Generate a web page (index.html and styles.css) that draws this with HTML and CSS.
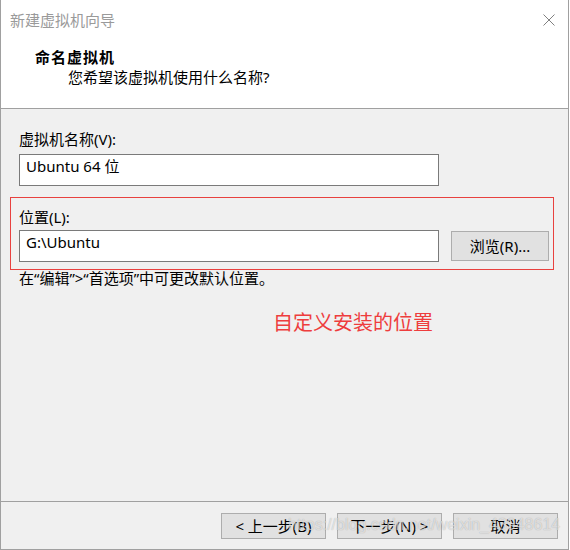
FILE: index.html
```html
<!DOCTYPE html>
<html lang="zh-CN">
<head>
<meta charset="utf-8">
<title>新建虚拟机向导</title>
<link rel="stylesheet" href="styles.css">
</head>
<body>
<div class="wizard">
  <div class="titlebar">
    <span class="title">新建虚拟机向导</span>
    <svg class="close" width="12" height="12" viewBox="0 0 12 12"><path d="M0.5 0.5L11.5 11.5M11.5 0.5L0.5 11.5" stroke="#808080" stroke-width="1" fill="none"/></svg>
  </div>
  <div class="head">
    <div class="head-title">命名虚拟机</div>
    <div class="head-sub">您希望该虚拟机使用什么名称?</div>
  </div>
  <div class="content">
    <div class="label">虚拟机名称(V):</div>
    <div class="field">Ubuntu 64 位</div>
    <div class="location">
      <div class="label">位置(L):</div>
      <div class="loc-row">
        <div class="field">G:\Ubuntu</div>
        <div class="btn browse">浏览(R)...</div>
      </div>
    </div>
    <div class="hint">在“编辑”&gt;“首选项”中可更改默认位置。</div>
    <div class="note">自定义安装的位置</div>
  </div>
  <div class="footer">
    <div class="btn">&lt; 上一步(B)</div>
    <div class="btn">下一步(N) &gt;</div>
    <div class="btn">取消</div>
  </div>
  <div class="watermark">https://blog.csdn.net/weixin_43948614</div>
</div>
</body>
</html>
```
FILE: styles.css
```css
* {margin:0; padding:0; box-sizing:border-box;}
body {background:#fff; font-family:"Noto Sans","Noto Sans CJK SC",sans-serif; font-size:15px; color:#000;}
.wizard {position:relative; width:569px; height:550px; display:flex; flex-direction:column; background:#f0f0f0; border:1px solid #a0a0a0; border-top:none;}
.titlebar {height:39px; flex:none; display:flex; align-items:center; justify-content:space-between; padding:0 13px 0 9px; background:#fff;}
.title {color:#9a9a9a; line-height:20px;}
.close {display:block;}
.head {height:70px; flex:none; background:#fff; border-bottom:1px solid #a0a0a0; padding:8px 0 0 34px;}
.head-title {font-weight:bold; line-height:20px; letter-spacing:1px;}
.head-sub {line-height:20px; margin-left:33px;}
.content {flex:1; padding:20px 0 0 9px;}
.label {line-height:20px; margin-left:9px;}
.field {width:420px; height:32px; background:#fff; border:1px solid #7a7a7a; padding:2px 0 0 6px; line-height:18px;}
.content > .field {margin:5px 0 0 9px;}
.location {width:544px; margin-top:11px; border:1px solid #e8413f; padding:9px 4px 7px 8px;}
.location .label {margin-left:0;}
.loc-row {display:flex; align-items:center; gap:12px; margin-top:3px;}
.btn {width:105px; height:26px; background:#e1e1e1; border:1px solid #adadad; display:flex; align-items:center; justify-content:center; line-height:20px;}
.browse {width:98px; height:30px;}
.hint {line-height:17px; margin-left:9px;}
.note {font-size:20px; line-height:24px; color:#ee3d3d; margin:24px 0 0 263px;}
.footer {height:48px; flex:none; border-top:1px solid #a0a0a0; display:flex; justify-content:flex-end; align-items:flex-start; gap:11px; padding:11px 10px 0 0;}
.watermark {position:absolute; left:287px; top:515px; font-family:"Liberation Sans",sans-serif; font-size:16px; line-height:20px; color:rgba(255,255,255,0.6); text-shadow:0 0 1px rgba(0,0,0,0.3); white-space:nowrap;}
```
